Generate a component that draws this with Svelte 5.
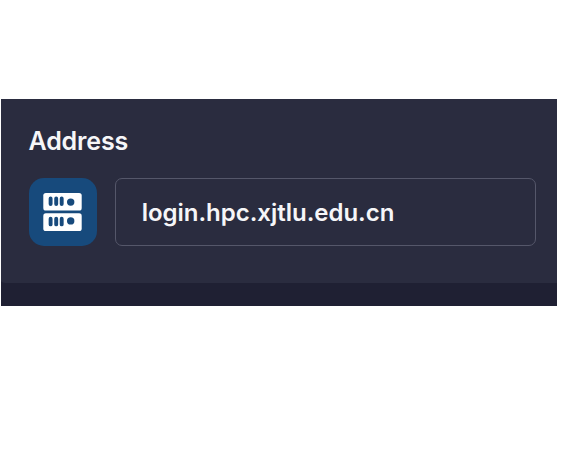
<script>
  let address = 'login.hpc.xjtlu.edu.cn';
  const units = [
    { top: 5.5, bottom: 11, light: 9.1 },
    { top: 25.8, bottom: 31.4, light: 27.9 }
  ];
</script>

<main>
  <section class="panel">
    <div class="field">
      <h2><span>Address</span></h2>
      <div class="row">
        <div class="host-icon">
          <svg width="39" height="38" viewBox="0 0 39 38" aria-hidden="true">
            <rect x="0.3" y="0" width="38.4" height="17.5" rx="2.6" fill="#fff" />
            <rect x="0.3" y="20.3" width="38.4" height="17.7" rx="2.6" fill="#fff" />
            {#each units as u}
              <path d="M7.6 {u.top}V{u.bottom}M13.2 {u.top}V{u.bottom}M18.7 {u.top}V{u.bottom}" stroke="#174a7c" stroke-width="3.9" stroke-linecap="round" />
              <circle cx="27.7" cy={u.light} r="3.7" fill="#174a7c" />
            {/each}
          </svg>
        </div>
        <div class="input"><span>{address}</span></div>
      </div>
    </div>
  </section>
</main>

<style>
  :global(body) { background: #fff; }
  main { height: 458px; padding: 99px 7px 0 1px; box-sizing: border-box; font-family: Inter, sans-serif; }
  .panel { height: 207px; background: #1f2033; overflow: hidden; }
  .field { height: 184px; box-sizing: border-box; padding: 27px 21.5px 0 27.5px; background: #2a2c3f; border-bottom-left-radius: 6px 2px; }
  h2 { margin: 0; height: 52px; font-size: 25px; line-height: 30px; font-weight: 600; letter-spacing: -0.15px; color: #f6f6f8; }
  h2 span { display: inline-block; white-space: nowrap; }
  .row { display: flex; gap: 18.5px; }
  .host-icon { width: 68px; height: 68px; border-radius: 15px; background: #174a7c; display: grid; place-items: center; }
  .input { flex: 1; box-sizing: border-box; height: 68px; border: 1px solid #55576a; border-radius: 7px; padding-left: 25.7px; display: flex; align-items: center; color: #f6f6f8; font-size: 24px; font-weight: 600; letter-spacing: -0.02px; }
</style>
